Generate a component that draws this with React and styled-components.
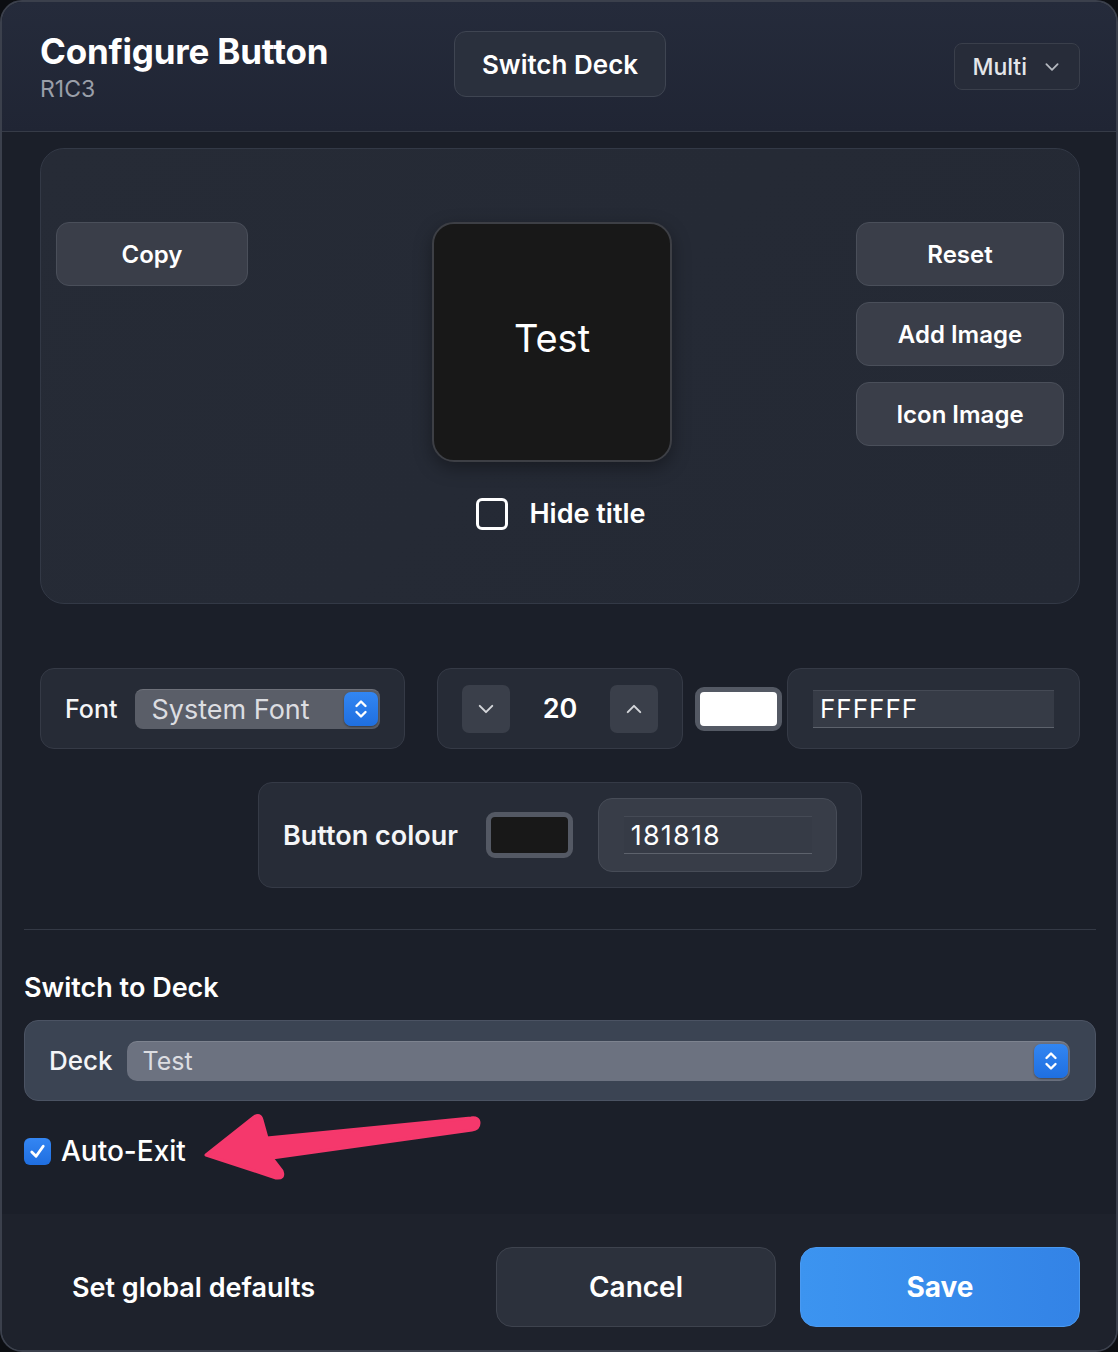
import React from "react";
import styled, { createGlobalStyle } from "styled-components";

const Global = createGlobalStyle`
  html, body { margin: 0; padding: 0; background: #0c0e12; }
  body { font-family: Inter, "Noto Sans", "Liberation Sans", sans-serif; color: #fff; }
  * { box-sizing: border-box; }
`;

const Dialog = styled.div`
  position: relative;
  width: 1118px;
  height: 1352px;
  display: flex;
  flex-direction: column;
  background: #1b1f29;
  border: 2px solid #3b404c;
  border-radius: 22px;
  overflow: hidden;
`;

const Header = styled.header`
  height: 130px;
  flex: none;
  display: grid;
  grid-template-columns: 1fr auto 1fr;
  align-items: start;
  padding: 28px 36px 0 38px;
  background: linear-gradient(180deg, #252b3b 0%, #202534 100%);
  border-bottom: 1px solid #363b47;
`;

const TitleBlock = styled.div`
  display: flex;
  flex-direction: column;
`;

const Title = styled.h1`
  margin: 0;
  font-size: 35px;
  line-height: 42px;
  font-weight: 700;
  letter-spacing: -0.2px;
`;

const Sub = styled.div`
  font-size: 23px;
  line-height: 34px;
  color: #9a9fa9;
`;

const HeadButton = styled.button`
  font-family: inherit;
  height: 66px;
  padding: 0 27px;
  margin-top: 1px;
  border-radius: 12px;
  border: 1px solid #3f4552;
  background: #2a303d;
  color: #fff;
  font-size: 26px;
  font-weight: 600;
`;

const MultiButton = styled.button`
  justify-self: end;
  margin-top: 13px;
  font-family: inherit;
  height: 47px;
  padding: 0 18px 0 17px;
  display: flex;
  align-items: center;
  gap: 16px;
  border-radius: 8px;
  border: 1px solid #3a3f4b;
  background: #272c39;
  color: #e4e6ea;
  font-size: 23px;
  font-weight: 500;
`;

const Upper = styled.section`
  padding: 16px 36px 0 38px;
  display: flex;
  flex-direction: column;
`;

const Panel = styled.div`
  height: 456px;
  padding: 73px 15px 0 15px;
  display: flex;
  justify-content: space-between;
  align-items: flex-start;
  border-radius: 24px;
  border: 1px solid #333946;
  background: linear-gradient(135deg, #262b36 0%, #242934 100%);
`;

const ButtonStack = styled.div`
  display: flex;
  flex-direction: column;
  gap: 16px;
`;

const ActionButton = styled.button`
  font-family: inherit;
  width: ${(p) => p.$w}px;
  height: 64px;
  border-radius: 13px;
  border: 1px solid #4a4f5a;
  background: #3a3e49;
  color: #fff;
  font-size: 24px;
  font-weight: 600;
`;

const PreviewColumn = styled.div`
  display: flex;
  flex-direction: column;
  align-items: center;
  gap: 35px;
`;

const Preview = styled.div`
  width: 240px;
  height: 240px;
  display: flex;
  align-items: center;
  justify-content: center;
  padding-bottom: 8px;
  border-radius: 22px;
  border: 2px solid #3d3f45;
  background: #181818;
  box-shadow: 0 6px 18px rgba(0, 0, 0, 0.35);
  font-size: 38px;
  color: #fff;
`;

const CheckRow = styled.label`
  display: flex;
  align-items: center;
  gap: ${(p) => p.$gap}px;
  font-size: ${(p) => p.$size}px;
  font-weight: ${(p) => p.$weight};
  margin-left: 18px;
`;

const EmptyBox = styled.span`
  width: 32px;
  height: 32px;
  border: 3px solid #fff;
  border-radius: 6px;
`;

const FontRow = styled.div`
  margin-top: 64px;
  height: 81px;
  display: flex;
  align-items: center;
`;

const Group = styled.div`
  height: ${(p) => p.$h || 81}px;
  width: ${(p) => p.$w}px;
  display: flex;
  align-items: center;
  padding: 0 24px;
  gap: ${(p) => p.$gap || 0}px;
  margin-left: ${(p) => p.$ml || 0}px;
  border-radius: 14px;
  border: 1px solid #353a46;
  background: ${(p) => p.$bg || "#262b36"};
`;

const Label = styled.span`
  font-size: ${(p) => p.$size}px;
  font-weight: ${(p) => p.$weight || 500};
  color: #f4f5f7;
  white-space: nowrap;
`;

const Select = styled.div`
  flex: 1;
  height: 40px;
  display: flex;
  align-items: center;
  justify-content: space-between;
  padding: 0 2px 0 16px;
  border-radius: ${(p) => p.$r || 8}px;
  background: ${(p) => p.$bg};
  border-top: 1px solid rgba(255, 255, 255, 0.12);
  color: #dcdde1;
  font-size: ${(p) => p.$size}px;
`;

const StepIcon = styled.span`
  width: 34px;
  height: 34px;
  border-radius: 7px;
  display: flex;
  align-items: center;
  justify-content: center;
  background: linear-gradient(180deg, #3286f2 0%, #1f6fe0 100%);
  box-shadow: 0 1px 2px rgba(0, 0, 0, 0.4);
`;

const StepButton = styled.span`
  width: 48px;
  height: 48px;
  border-radius: 7px;
  display: flex;
  align-items: center;
  justify-content: center;
  background: #3a3f4a;
`;

const Number = styled.span`
  flex: 1;
  text-align: center;
  font-size: 27px;
  font-weight: 600;
`;

const Swatch = styled.span`
  width: 87px;
  height: ${(p) => p.$h}px;
  margin: 0 ${(p) => p.$mr}px 0 ${(p) => p.$ml}px;
  border-radius: 9px;
  border: 5px solid #545964;
  background: ${(p) => p.$color};
`;

const HexInput = styled.div`
  width: ${(p) => p.$w}px;
  height: 38px;
  display: flex;
  align-items: center;
  padding-left: 7px;
  background: #363b46;
  border-top: 1px solid #454a55;
  border-bottom: 1px solid #5d626c;
  font-size: ${(p) => p.$size}px;
  letter-spacing: ${(p) => p.$ls}px;
  color: #fff;
`;

const ColourRow = styled.div`
  margin-top: 33px;
  display: flex;
  justify-content: center;
`;

const HexBox = styled.div`
  width: 240px;
  height: 74px;
  display: flex;
  align-items: center;
  padding-left: 25px;
  border-radius: 14px;
  border: 1px solid #474c57;
  background: #383d48;
`;

const Divider = styled.hr`
  margin: 41px 20px 0 22px;
  border: none;
  border-top: 1px solid #343945;
`;

const Lower = styled.section`
  padding: 0 20px 0 22px;
  flex: 1;
  display: flex;
  flex-direction: column;
`;

const Heading = styled.h2`
  margin: 42px 0 0;
  font-size: 27px;
  line-height: 32px;
  font-weight: 600;
`;

const DeckGroup = styled.div`
  margin-top: 16px;
  height: 81px;
  display: flex;
  align-items: center;
  gap: 14px;
  padding: 0 25px 0 24px;
  border-radius: 14px;
  border: 1px solid #4b5363;
  background: #3b4453;
`;

const AutoRow = styled.div`
  position: relative;
  margin-top: 34px;
  height: 32px;
  display: flex;
  align-items: center;
  gap: 10px;
  font-size: 28px;
  font-weight: 500;
`;

const BlueCheck = styled.span`
  width: 27px;
  height: 27px;
  border-radius: 6px;
  background: linear-gradient(180deg, #3486f3, #1f6ee0);
  display: flex;
  align-items: center;
  justify-content: center;
`;

const Arrow = styled.svg`
  position: absolute;
  left: 174px;
  top: -28px;
  pointer-events: none;
`;

const Footer = styled.footer`
  height: 136px;
  flex: none;
  display: flex;
  align-items: center;
  padding: 10px 36px 0 70px;
  background: #1e222c;
`;

const FooterText = styled.span`
  flex: 1;
  font-size: 27px;
  font-weight: 600;
`;

const FooterButton = styled.button`
  font-family: inherit;
  width: 280px;
  height: 80px;
  margin-left: ${(p) => p.$ml}px;
  border-radius: 16px;
  border: 1px solid ${(p) => (p.$primary ? "#4a9af2" : "#3e434e")};
  background: ${(p) =>
    p.$primary ? "linear-gradient(90deg, #3c94f0, #3383e6)" : "#2c313c"};
  color: #fff;
  font-size: 28px;
  font-weight: ${(p) => (p.$primary ? 700 : 600)};
`;

const Chevron = ({ up, size = 20, color = "#d4d6da", w = 1.6 }) => (
  <svg width={size} height={size} viewBox="0 0 16 16" fill="none">
    <path
      d={up ? "M3 10.5 L8 5.5 L13 10.5" : "M3 5.5 L8 10.5 L13 5.5"}
      stroke={color}
      strokeWidth={w}
      strokeLinecap="round"
      strokeLinejoin="round"
    />
  </svg>
);

const UpDown = () => (
  <svg width="16" height="24" viewBox="0 0 16 24" fill="none">
    <path d="M3.5 9 L8 4.5 L12.5 9" stroke="#fff" strokeWidth="2.4" strokeLinecap="round" strokeLinejoin="round" />
    <path d="M3.5 15 L8 19.5 L12.5 15" stroke="#fff" strokeWidth="2.4" strokeLinecap="round" strokeLinejoin="round" />
  </svg>
);

export default function App() {
  return (
    <>
      <Global />
      <Dialog>
        <Header>
          <TitleBlock>
            <Title>Configure Button</Title>
            <Sub>R1C3</Sub>
          </TitleBlock>
          <HeadButton>Switch Deck</HeadButton>
          <MultiButton>
            Multi
            <Chevron size={18} color="#b4b8bf" w={1.6} />
          </MultiButton>
        </Header>

        <Upper>
          <Panel>
            <ActionButton $w={192}>Copy</ActionButton>
            <PreviewColumn>
              <Preview>Test</Preview>
              <CheckRow $gap={21} $size={27} $weight={600}>
                <EmptyBox />
                Hide title
              </CheckRow>
            </PreviewColumn>
            <ButtonStack>
              <ActionButton $w={208}>Reset</ActionButton>
              <ActionButton $w={208}>Add Image</ActionButton>
              <ActionButton $w={208}>Icon Image</ActionButton>
            </ButtonStack>
          </Panel>

          <FontRow>
            <Group $w={365} $gap={18}>
              <Label $size={25}>Font</Label>
              <Select $bg="#5a5e68" $size={27}>
                System Font
                <StepIcon>
                  <UpDown />
                </StepIcon>
              </Select>
            </Group>
            <Group $w={246} $ml={32}>
              <StepButton>
                <Chevron />
              </StepButton>
              <Number>20</Number>
              <StepButton>
                <Chevron up />
              </StepButton>
            </Group>
            <Swatch $color="#ffffff" $h={44} $ml={12} $mr={5} />
            <Group $w={293} $bg="#282d38" style={{ paddingLeft: 25 }}>
              <HexInput $w={241} $ls={1} $size={26}>FFFFFF</HexInput>
            </Group>
          </FontRow>

          <ColourRow>
            <Group $w={604} $h={106} $bg="#272c37">
              <Label $size={27} $weight={600}>Button colour</Label>
              <Swatch $color="#181818" $h={46} $ml={28} $mr={25} />
              <HexBox>
                <HexInput $w={188} $ls={1.2} $size={27}>181818</HexInput>
              </HexBox>
            </Group>
          </ColourRow>
        </Upper>

        <Divider />

        <Lower>
          <Heading>Switch to Deck</Heading>
          <DeckGroup>
            <Label $size={26}>Deck</Label>
            <Select $bg="#6c7280" $size={25} $r={10}>
              Test
              <StepIcon>
                <UpDown />
              </StepIcon>
            </Select>
          </DeckGroup>
          <AutoRow>
            <BlueCheck>
              <svg width="19" height="19" viewBox="0 0 20 20" fill="none">
                <path d="M4 10.5 L8.5 15 L16 4.5" stroke="#fff" strokeWidth="3" strokeLinecap="round" strokeLinejoin="round" />
              </svg>
            </BlueCheck>
            Auto-Exit
            <Arrow width="290" height="80" viewBox="190 1108 290 80">
              <path
                d="M198 1156 L246 1118 Q252 1114 254 1121 L259 1139 L463 1119 Q471 1118 471 1124 Q471 1130 464 1131 L264 1159 L274 1172 Q277 1180 268 1179 Z"
                fill="#f5386c"
                stroke="#f5386c"
                strokeWidth="3"
                strokeLinejoin="round"
              />
            </Arrow>
          </AutoRow>
        </Lower>

        <Footer>
          <FooterText>Set global defaults</FooterText>
          <FooterButton $ml={0}>Cancel</FooterButton>
          <FooterButton $ml={24} $primary>
            Save
          </FooterButton>
        </Footer>
      </Dialog>
    </>
  );
}
